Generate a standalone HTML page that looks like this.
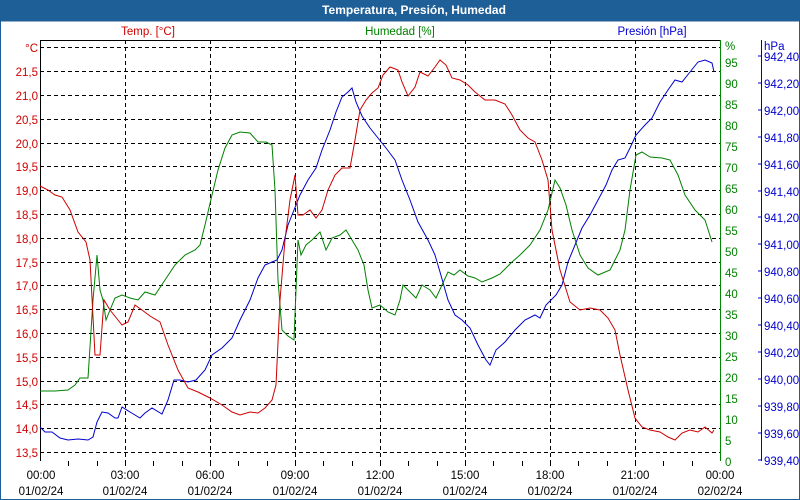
<!DOCTYPE html>
<html><head><meta charset="utf-8"><style>
html,body{margin:0;padding:0;background:#fff}
body{width:800px;height:500px;overflow:hidden;position:relative;font-family:"Liberation Sans",sans-serif}
.bar{position:absolute;left:0;top:0;width:800px;height:21px;background:#1f5f98;color:#fff;font-weight:bold;font-size:12px;line-height:21px;text-align:center;text-indent:28px}
svg{position:absolute;left:0;top:0}
</style></head><body>
<div class="bar">Temperatura, Presión, Humedad</div>
<svg width="800" height="500" font-family="Liberation Sans, sans-serif" font-size="11.5">
<rect x="0.5" y="21" width="799" height="478.5" fill="none" stroke="#1f5f98" stroke-width="1"/>
<g stroke="#000" stroke-dasharray="4,3" stroke-width="1">
<line x1="40" x2="720" y1="47.5" y2="47.5"/><line x1="40" x2="720" y1="71.5" y2="71.5"/><line x1="40" x2="720" y1="95.5" y2="95.5"/><line x1="40" x2="720" y1="119.5" y2="119.5"/><line x1="40" x2="720" y1="143.5" y2="143.5"/><line x1="40" x2="720" y1="166.5" y2="166.5"/><line x1="40" x2="720" y1="190.5" y2="190.5"/><line x1="40" x2="720" y1="214.5" y2="214.5"/><line x1="40" x2="720" y1="238.5" y2="238.5"/><line x1="40" x2="720" y1="262.5" y2="262.5"/><line x1="40" x2="720" y1="285.5" y2="285.5"/><line x1="40" x2="720" y1="309.5" y2="309.5"/><line x1="40" x2="720" y1="333.5" y2="333.5"/><line x1="40" x2="720" y1="357.5" y2="357.5"/><line x1="40" x2="720" y1="381.5" y2="381.5"/><line x1="40" x2="720" y1="404.5" y2="404.5"/><line x1="40" x2="720" y1="428.5" y2="428.5"/><line x1="40" x2="720" y1="452.5" y2="452.5"/>
<line x1="125.5" x2="125.5" y1="40" y2="461"/><line x1="210.5" x2="210.5" y1="40" y2="461"/><line x1="295.5" x2="295.5" y1="40" y2="461"/><line x1="380.5" x2="380.5" y1="40" y2="461"/><line x1="465.5" x2="465.5" y1="40" y2="461"/><line x1="550.5" x2="550.5" y1="40" y2="461"/><line x1="635.5" x2="635.5" y1="40" y2="461"/>
</g>
<line x1="40" x2="720" y1="40.5" y2="40.5" stroke="#000"/>
<line x1="40.5" x2="40.5" y1="40" y2="461" stroke="#000"/>
<line x1="720.5" x2="720.5" y1="40" y2="461" stroke="#080"/>
<line x1="761.5" x2="761.5" y1="40" y2="461" stroke="#00c"/>
<g stroke="#000"><path d="M68.5 461v5M97.5 461v5M125.5 461v5M153.5 461v5M182.5 461v5M210.5 461v5M238.5 461v5M267.5 461v5M295.5 461v5M323.5 461v5M352.5 461v5M380.5 461v5M408.5 461v5M437.5 461v5M465.5 461v5M493.5 461v5M522.5 461v5M550.5 461v5M578.5 461v5M607.5 461v5M635.5 461v5M663.5 461v5M692.5 461v5"/></g>
<polyline fill="none" stroke="#008000" points="40,391 55,391 68,390 75,385 80,378 88,378 93,300 97,255 100,290 103,300 106,320 110,310 115,298 122,295 130,298 138,300 145,292 155,295 165,280 175,265 185,255 195,250 200,245 205,225 212,195 218,170 225,148 232,135 240,132 250,133 258,142 266,142 272,145 275,190 278,280 282,330 288,336 294,340 298,240 301,255 306,245 312,240 320,232 326,250 332,238 340,235 346,230 352,240 358,250 364,265 368,290 372,308 380,305 388,312 395,315 400,300 403,285 410,292 416,298 422,285 430,290 436,298 442,285 448,272 454,275 460,270 468,276 475,278 482,282 492,278 500,274 506,268 512,262 520,255 530,245 540,230 548,210 555,180 560,188 566,205 572,230 580,255 588,268 598,275 610,270 620,250 625,230 630,190 636,155 642,152 650,157 662,158 670,160 678,175 685,195 695,210 705,220 712,242"/>
<polyline fill="none" stroke="#0000cc" points="40,427 45,432 52,432 60,438 68,440 78,439 88,440 93,437 97,422 102,412 108,413 115,418 118,418 122,407 130,412 140,418 145,413 152,408 162,414 168,400 174,380 180,380 188,382 196,380 205,370 212,355 222,348 232,338 240,320 250,300 258,278 265,265 272,262 277,260 282,250 288,225 294,210 300,195 308,180 316,168 322,150 330,130 336,112 342,97 348,92 352,88 356,102 362,116 370,128 378,138 386,148 395,160 402,180 410,200 418,222 428,240 435,255 440,272 448,300 455,315 462,320 470,328 478,345 486,360 490,365 496,350 505,342 515,330 525,320 535,315 540,318 546,305 556,295 562,285 568,262 575,245 582,228 590,215 598,200 606,185 612,170 618,160 625,158 630,148 636,135 645,125 652,118 660,102 668,90 675,80 682,82 690,72 698,62 705,60 712,63 714,72"/>
<polyline fill="none" stroke="#cc0000" points="40,186 48,190 55,195 62,197 70,210 78,232 86,242 90,260 95,355 100,355 104,300 110,310 118,320 122,325 128,322 135,305 142,310 150,316 160,322 168,345 178,370 188,388 198,392 210,398 222,405 232,412 240,415 250,412 258,413 265,408 272,400 276,385 280,300 285,240 290,200 295,175 298,215 303,215 310,210 316,218 322,210 328,190 335,175 342,168 350,168 355,140 360,110 366,100 372,93 378,88 383,75 390,67 398,70 402,82 408,96 415,87 420,72 428,76 435,67 440,60 446,65 452,78 460,80 468,85 475,92 485,100 495,100 505,104 512,115 520,130 528,138 535,142 542,160 548,180 552,230 560,270 570,302 580,310 590,308 600,310 608,318 615,330 620,355 628,390 635,418 642,427 650,430 660,432 668,437 675,440 682,433 690,430 698,432 705,427 712,433 714,430"/>
<g fill="#d00000" text-anchor="end">
<text x="38" y="52">°C</text><text x="38" y="76">21,5</text><text x="38" y="100">21,0</text><text x="38" y="124">20,5</text><text x="38" y="148">20,0</text><text x="38" y="171">19,5</text><text x="38" y="195">19,0</text><text x="38" y="219">18,5</text><text x="38" y="243">18,0</text><text x="38" y="267">17,5</text><text x="38" y="290">17,0</text><text x="38" y="314">16,5</text><text x="38" y="338">16,0</text><text x="38" y="362">15,5</text><text x="38" y="386">15,0</text><text x="38" y="409">14,5</text><text x="38" y="433">14,0</text><text x="38" y="457">13,5</text>
</g>
<text x="148" y="35" fill="#d00000" text-anchor="middle">Temp. [°C]</text>
<text x="400" y="35" fill="#008000" text-anchor="middle">Humedad [%]</text>
<text x="652" y="35" fill="#0000cc" text-anchor="middle">Presión [hPa]</text>
<g fill="#008000">
<text x="725" y="50">%</text><text x="725" y="67">95</text><text x="725" y="88">90</text><text x="725" y="109">85</text><text x="725" y="130">80</text><text x="725" y="151">75</text><text x="725" y="172">70</text><text x="725" y="193">65</text><text x="725" y="214">60</text><text x="725" y="235">55</text><text x="725" y="256">50</text><text x="725" y="277">45</text><text x="725" y="298">40</text><text x="725" y="319">35</text><text x="725" y="340">30</text><text x="725" y="361">25</text><text x="725" y="382">20</text><text x="725" y="403">15</text><text x="725" y="424">10</text><text x="725" y="445">5</text><text x="725" y="466">0</text>
</g>
<g fill="#0000cc">
<text x="764" y="50">hPa</text><text x="764" y="61">942,40</text><text x="764" y="88">942,20</text><text x="764" y="115">942,00</text><text x="764" y="142">941,80</text><text x="764" y="169">941,60</text><text x="764" y="196">941,40</text><text x="764" y="222">941,20</text><text x="764" y="249">941,00</text><text x="764" y="276">940,80</text><text x="764" y="303">940,60</text><text x="764" y="330">940,40</text><text x="764" y="357">940,20</text><text x="764" y="384">940,00</text><text x="764" y="411">939,80</text><text x="764" y="438">939,60</text><text x="764" y="465">939,40</text>
</g>
<path d="M761 56h-3M761 83h-3M761 110h-3M761 137h-3M761 164h-3M761 191h-3M761 217h-3M761 244h-3M761 271h-3M761 298h-3M761 325h-3M761 352h-3M761 379h-3M761 406h-3M761 433h-3M761 460h-3" stroke="#00c"/>
<g fill="#000" text-anchor="middle">
<text x="41" y="479">00:00</text><text x="41" y="495">01/02/24</text>
<text x="125" y="479">03:00</text><text x="125" y="495">01/02/24</text>
<text x="210" y="479">06:00</text><text x="210" y="495">01/02/24</text>
<text x="295" y="479">09:00</text><text x="295" y="495">01/02/24</text>
<text x="380" y="479">12:00</text><text x="380" y="495">01/02/24</text>
<text x="465" y="479">15:00</text><text x="465" y="495">01/02/24</text>
<text x="550" y="479">18:00</text><text x="550" y="495">01/02/24</text>
<text x="635" y="479">21:00</text><text x="635" y="495">01/02/24</text>
<text x="720" y="479">00:00</text><text x="720" y="495">02/02/24</text>
</g>
</svg>
</body></html>
